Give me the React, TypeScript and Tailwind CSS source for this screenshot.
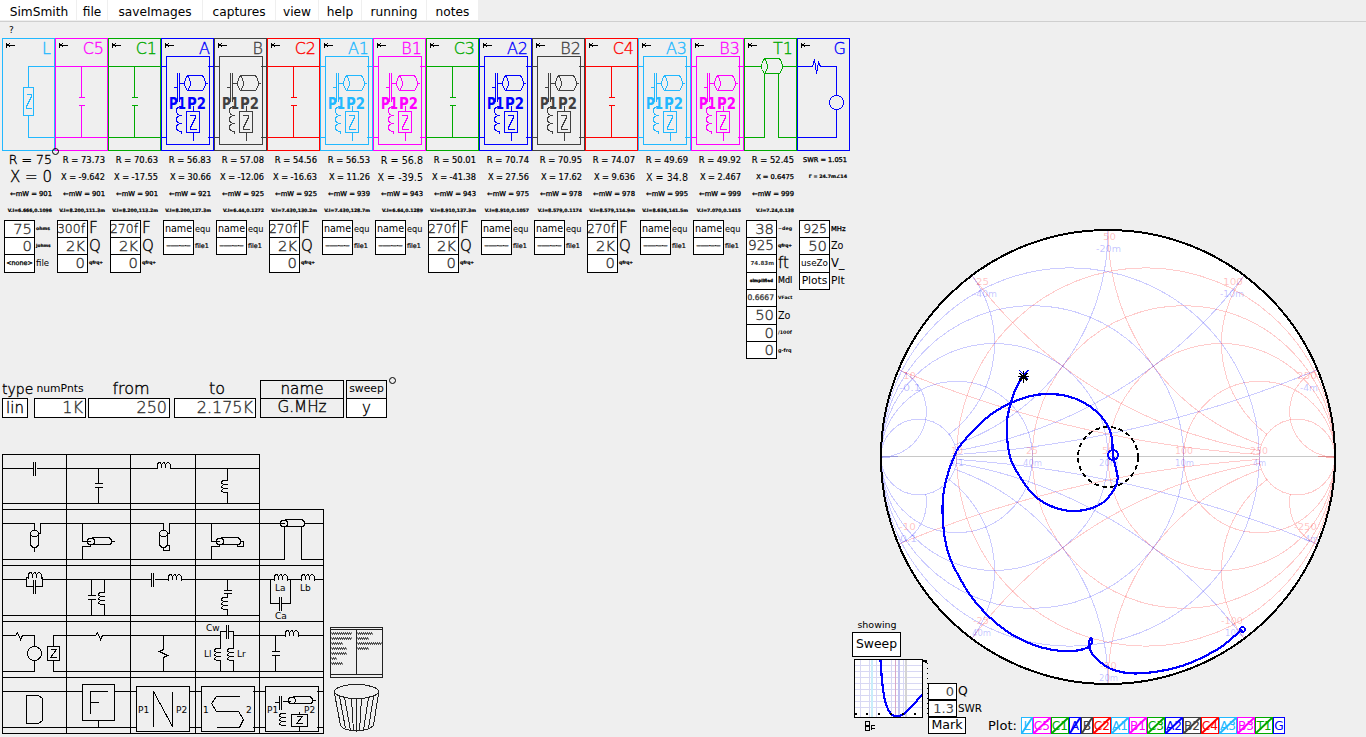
import React from "react";

const SANS = "font-['DejaVu_Sans',sans-serif]";
const THIN = "font-extralight [-webkit-text-stroke:0.35px]";

const CYAN = "#22b8ff";
const MAGENTA = "#ff00ff";
const GREEN = "#00aa00";
const BLUE = "#0000ff";
const DARK = "#404040";
const RED = "#ff0000";

/* ---------- menu ---------- */

const menus = [
  ["SimSmith", "w-[76px] pl-[2px]"],
  ["file", "w-[30px]"],
  ["saveImages", "w-[94px]"],
  ["captures", "w-[72px]"],
  ["view", "w-[42px]"],
  ["help", "w-[42px]"],
  ["running", "w-[64px]"],
  ["notes", "w-[51px]"],
];

function MenuBar() {
  return (
    <nav className="flex h-[22px] shrink-0 gap-px border-b border-[#cfcfcf] text-[12.2px] leading-[24px]">
      {menus.map(([m, w]) => (
        <div key={m} className={`${w} h-5 bg-white text-center whitespace-nowrap`}>
          {m}
        </div>
      ))}
    </nav>
  );
}

/* ---------- circuit columns ---------- */

type Kind = "L" | "C" | "N" | "T" | "G";
type Line = [string, string];
type Field = { v: string; vs: string; k: string; ks: string; c?: string };
type Col = { name: string; color: string; kind: Kind; read: Line[]; fields: Field[] };

const S12 = "text-[12.4px] " + THIN;
const S15 = "text-[14.8px] " + THIN;
const R8 = "text-[8.4px] [-webkit-text-stroke:0.2px_#000]";
const X8 = "text-[8.2px] [-webkit-text-stroke:0.2px_#000]";
const R9 = "text-[9.6px]";
const M7 = "text-[6.8px] [-webkit-text-stroke:0.3px_#000]";
const V4 = "text-[4.6px] font-bold [-webkit-text-stroke:0.2px_#000]";

const gray = "text-[#333] justify-end pr-[2px]";
const ink = "text-black justify-center";

const cap = (v: string): Field[] => [
  { v, vs: S12, k: "F", ks: "text-[15.5px] " + THIN, c: gray },
  { v: "2K", vs: S15, k: "Q", ks: "text-[15px] " + THIN, c: gray },
  { v: "0", vs: S15, k: "qfrq+", ks: "text-[4.4px] font-bold [-webkit-text-stroke:0.2px_#000]", c: gray },
];
const net: Field[] = [
  { v: "name", vs: "text-[9.6px]", k: "equ", ks: "text-[8.2px]", c: ink },
  { v: "———·—·—", vs: "text-[4.2px] font-bold [-webkit-text-stroke:0.4px_#000]", k: "file1", ks: "text-[6.4px] [-webkit-text-stroke:0.2px_#000]", c: ink },
];
const rd = (r: string, x: string, mw: string, v: string, rs = R8, xs = X8): Line[] => [
  ["R = " + r, rs],
  ["X = " + x, xs],
  ["←mW = " + mw, M7],
  [v, V4],
];

const cols: Col[] = [
  {
    name: "L", color: CYAN, kind: "L",
    read: rd("75", "0", "901", "V.I=6.666,0.1096", "text-[12.6px] " + THIN, "text-[15px] " + THIN),
    fields: [
      { v: "75", vs: S15, k: "ohms", ks: "text-[4.6px] font-bold [-webkit-text-stroke:0.2px_#000]", c: gray },
      { v: "0", vs: S15, k: "johms", ks: "text-[4.3px] font-bold [-webkit-text-stroke:0.2px_#000]", c: gray },
      { v: "<none>", vs: "text-[6.4px] [-webkit-text-stroke:0.3px_#000]", k: "file", ks: "text-[8.6px]", c: ink },
    ],
  },
  { name: "C5", color: MAGENTA, kind: "C", read: rd("73.73", "-9.642", "901", "V.I=8.200,111.3m"), fields: cap("300f") },
  { name: "C1", color: GREEN, kind: "C", read: rd("70.63", "-17.55", "901", "V.I=8.200,113.2m"), fields: cap("270f") },
  { name: "A", color: BLUE, kind: "N", read: rd("56.83", "30.66", "921", "V.I=8.200,127.3m"), fields: net },
  { name: "B", color: DARK, kind: "N", read: rd("57.08", "-12.06", "925", "V.I=6.44,0.1272"), fields: net },
  { name: "C2", color: RED, kind: "C", read: rd("54.56", "-16.63", "925", "V.I=7.430,130.2m"), fields: cap("270f") },
  { name: "A1", color: CYAN, kind: "N", read: rd("56.53", "11.26", "939", "V.I=7.430,128.7m"), fields: net },
  { name: "B1", color: MAGENTA, kind: "N", read: rd("56.8", "-39.5", "943", "V.I=6.64,0.1289", R9, R9), fields: net },
  { name: "C3", color: GREEN, kind: "C", read: rd("50.01", "-41.38", "943", "V.I=8.910,137.3m"), fields: cap("270f") },
  { name: "A2", color: BLUE, kind: "N", read: rd("70.74", "27.56", "975", "V.I=8.910,0.1057"), fields: net },
  { name: "B2", color: DARK, kind: "N", read: rd("70.95", "17.62", "978", "V.I=8.579,0.1174"), fields: net },
  { name: "C4", color: RED, kind: "C", read: rd("74.07", "9.636", "978", "V.I=8.579,114.9m"), fields: cap("270f") },
  { name: "A3", color: CYAN, kind: "N", read: rd("49.69", "34.8", "995", "V.I=8.636,141.5m", R8, R9), fields: net },
  { name: "B3", color: MAGENTA, kind: "N", read: rd("49.92", "2.467", "999", "V.I=7.070,0.1415"), fields: net },
  {
    name: "T1", color: GREEN, kind: "T",
    read: rd("52.45", "0.6475", "999", "V.I=7.24,0.138", R8, "text-[6.7px] [-webkit-text-stroke:0.3px_#000]"),
    fields: [
      { v: "38", vs: S15, k: "~deg", ks: "text-[4.8px] font-bold", c: gray },
      { v: "925", vs: "text-[13.6px] " + THIN, k: "qfrq+", ks: "text-[4.4px] font-bold [-webkit-text-stroke:0.2px_#000]", c: gray },
      { v: "74.83m", vs: "text-[5.6px] font-bold", k: "ft", ks: "text-[15px] " + THIN, c: gray },
      { v: "simplified", vs: "text-[4.2px] font-bold [-webkit-text-stroke:0.3px_#000]", k: "Mdl", ks: "text-[8px] [-webkit-text-stroke:0.2px_#000]", c: ink },
      { v: "0.6667", vs: "text-[7.6px] [-webkit-text-stroke:0.3px_#444]", k: "VFact", ks: "text-[4.6px] font-bold", c: gray },
      { v: "50", vs: S15, k: "Zo", ks: "text-[9.6px]", c: gray },
      { v: "0", vs: S15, k: "/100f", ks: "text-[4.8px] font-bold", c: gray },
      { v: "0", vs: S15, k: "g-frq", ks: "text-[4.9px] font-bold", c: gray },
    ],
  },
  {
    name: "G", color: BLUE, kind: "G",
    read: [["SWR = 1.051", "text-[6.6px] [-webkit-text-stroke:0.3px_#000]"], ["Γ = 24.7m∠14", "text-[4.8px] font-bold [-webkit-text-stroke:0.2px_#000]"]],
    fields: [
      { v: "925", vs: S12, k: "MHz", ks: "text-[6.8px] [-webkit-text-stroke:0.3px_#000]", c: gray },
      { v: "50", vs: S15, k: "Zo", ks: "text-[9.6px]", c: gray },
      { v: "useZo", vs: "text-[8.8px]", k: "V_", ks: "text-[11.5px]", c: ink },
      { v: "Plots", vs: "text-[10.7px]", k: "Plt", ks: "text-[10.7px]", c: ink },
    ],
  },
];

const cardPaths: Record<Kind, string> = {
  L: "M52 28H26V49M21 49H31V77H21ZM24 56H29V58L24 68V70H29M26 77V99H52",
  C: "M0 28H52M26 28V59M23 59H29M23 67H29M26 67V99M0 99H52",
  N: "M5 18H48V106H5ZM0 28H5M46 28H52M0 99H5M46 99H52M16 34V63M18 34V63M12 49H16M18 45H23M26 37H41Q44 41 44 45Q44 49 41 52H26M26 37Q29 41 29 45Q29 49 26 52Q23 49 23 45Q23 41 26 37M44 45H46M21 68Q15 68 15 72Q15 77 20 77Q15 77 15 81Q15 85 20 85Q15 85 15 89Q15 93 20 93V95M25 73H38V94H25ZM32 67V73M32 94V102M28 77H34V79L29 89V91H35",
  T: "M0 28H17M20 20H35Q38 24 38 28Q38 32 35 35H20M20 20Q23 24 23 28Q23 32 20 35Q17 32 17 28Q17 24 20 20M38 28H52M20 35V99H0M34 35V99H52",
  G: "M0 28H15L17 21L19 35L21 24L23 28H39V57M39 57A7 7 0 1 0 39.01 57M39 71V99H0",
};

function Card({ c }: { c: Col }) {
  return (
    <svg width="53" height="113" viewBox="0 0 53 113" className="block shrink-0">
      <g transform="translate(.5 .5)" fill="none" stroke={c.color} shapeRendering="crispEdges">
        <rect x="0" y="0" width="52" height="112" />
        <path d={cardPaths[c.kind]} />
        <path d="M3.5 4.5V9M4 6.5H12M5 6.5L8 4M5 6.5L8 9" stroke="#000" />
      </g>
      {c.kind === "N" && (
        <g fill={c.color} fontSize="15" fontWeight="bold">
          <text x="8" y="71" textLength="17" lengthAdjust="spacingAndGlyphs">P1</text>
          <text x="26" y="71" textLength="19" lengthAdjust="spacingAndGlyphs">P2</text>
        </g>
      )}
      <text x="49" y="16" textAnchor="end" fontSize="16" className="font-extralight" fill={c.color} stroke={c.color} strokeWidth="0.35">
        {c.name}
      </text>
    </svg>
  );
}

const rowH = ["h-[17px]", "h-[17px]", "h-[18px]"];

function Column({ c }: { c: Col }) {
  return (
    <div className="flex w-[53px] shrink-0 flex-col">
      <Card c={c} />
      <div className="flex h-[69px] flex-col pt-px pr-[3px]">
        {c.read.map(([t, s], i) => (
          <div key={i} className={`${s} flex h-[17px] items-center justify-end leading-none whitespace-pre`}>
            {t}
          </div>
        ))}
      </div>
      {c.fields.map((f, i) => (
        <div key={i} className={`${rowH[i % 3]} flex shrink-0 pl-[2px]`}>
          <div
            className={`${f.vs} ${f.c} -mb-px flex w-[31px] shrink-0 items-center overflow-hidden border border-black bg-white leading-none whitespace-nowrap`}
          >
            {f.v}
          </div>
          <div className={`${f.ks} flex items-center pt-px pl-px leading-none whitespace-nowrap`}>{f.k}</div>
        </div>
      ))}
    </div>
  );
}

/* ---------- sweep table ---------- */

const num = "justify-end bg-white pr-[2px] text-[16px] text-[#333] " + THIN;

const sweepCols = [
  { h: "type", hs: "justify-start text-[14px] " + THIN, v: "lin", w: "w-[26px]", m: "mr-[6px]", vs: "justify-center bg-white text-[15px] " + THIN, box: "" },
  { h: "numPnts", hs: "justify-center text-[10.8px]", v: "1K", w: "w-[52px]", m: "mr-[2px]", vs: num, box: "" },
  { h: "from", hs: "justify-center pl-1 text-[16px] " + THIN, v: "250", w: "w-[82px]", m: "mr-[4px]", vs: num, box: "" },
  { h: "to", hs: "justify-center pl-1 text-[16px] " + THIN, v: "2.175K", w: "w-[82px]", m: "mr-[4px]", vs: num, box: "" },
  { h: "name", hs: "justify-center text-[15.2px] " + THIN, v: "G.MHz", w: "w-[84px]", m: "mr-[2px]", vs: "justify-center text-[15.2px] " + THIN, box: "border-t border-x border-black" },
  { h: "sweep", hs: "justify-center text-[10.8px]", v: "y", w: "w-[41px]", m: "mr-[2px]", vs: "justify-center bg-white text-[15px] " + THIN, box: "border-t border-x border-black" },
];

function SweepTable() {
  return (
    <div className="flex h-[38px] pl-[2px]">
      {sweepCols.map((s) => (
        <div key={s.h} className={`${s.w} ${s.m} flex shrink-0 flex-col`}>
          <div className={`${s.hs} ${s.box} flex h-[18px] items-center leading-none`}>{s.h}</div>
          <div className={`${s.vs} flex h-5 items-center border border-black leading-none`}>{s.v}</div>
        </div>
      ))}
      <svg width="8" height="8" className="-mt-[4px] block">
        <circle cx="3.5" cy="4.5" r="3" fill="none" stroke="#000" />
      </svg>
    </div>
  );
}

/* ---------- parts palette ---------- */

const coilH = (x: number, y: number) =>
  `M${x} ${y}V${y - 3}Q${x} ${y - 6} ${x + 2} ${y - 6}Q${x + 4} ${y - 6} ${x + 4} ${y - 1}V${y - 3}Q${x + 5} ${y - 6} ${x + 6} ${y - 6}Q${x + 8} ${y - 6} ${x + 8} ${y - 1}V${y - 3}Q${x + 9} ${y - 6} ${x + 10} ${y - 6}Q${x + 13} ${y - 6} ${x + 13} ${y - 3}V${y}`;
const coilV = (x: number, y: number) =>
  `M${x} ${y}H${x - 3}Q${x - 6} ${y} ${x - 6} ${y + 2}Q${x - 6} ${y + 4} ${x} ${y + 4}H${x - 3}Q${x - 6} ${y + 5} ${x - 6} ${y + 6}Q${x - 6} ${y + 8} ${x} ${y + 8}H${x - 3}Q${x - 6} ${y + 9} ${x - 6} ${y + 10}Q${x - 6} ${y + 12} ${x} ${y + 12}`;
const lineH = (x: number, y: number, end: number) =>
  `M${x} ${y}A3.5 3.5 0 1 0 ${x + 7} ${y}A3.5 3.5 0 1 0 ${x} ${y}M${x + 4} ${y - 4}H${end - 3}Q${end} ${y - 3} ${end} ${y}Q${end} ${y + 3} ${end - 3} ${y + 3}H${x + 4}`;
const lineV = (x: number, y: number) =>
  `M${x} ${y}A4 3 0 1 0 ${x + 8} ${y}A4 3 0 1 0 ${x} ${y}M${x} ${y}V${y + 11}Q${x + 1} ${y + 14} ${x + 4} ${y + 14}Q${x + 7} ${y + 14} ${x + 8} ${y + 11}V${y}`;

type Part = { d: string; t?: [number, number, string][] };

const xs = [2, 66, 130, 195, 259];
const ws = [64, 64, 65, 64, 64];
const ys = [454, 509, 565, 621, 677];
const hs = [55, 56, 56, 56, 56];

const parts: Part[][] = [
  [
    { d: "M2 468H32M33 461V475M35 461V475M36 468H66M2 503H66" },
    { d: "M66 468H130M98 468V483M94 483H102M94 487H102M98 487V503M66 503H130" },
    { d: "M130 468H157M170 468H195M130 503H195" + coilH(157, 468) },
    { d: "M195 468H259M227 468V480M227 492V503M195 503H259" + coilV(227, 480) },
  ],
  [
    { d: "M2 523H34V530M34 547V551M66 523H40V533H38M2 559H66" + lineV(30, 533) },
    { d: "M66 523H130M82 523V541H90M90 544V546H82V559M111 541H114M66 559H130" + lineH(87, 541, 111) },
    { d: "M130 523H163V530M163 547V550H169V545H167M195 523H169V533H167M130 559H195" + lineV(159, 533) },
    { d: "M195 523H259M211 523V541H219M219 544V546H211V559M240 541H243V546H237V544M195 559H259" + lineH(216, 541, 240) },
    { d: "M259 523H284M304 523H323M284 526V559H259M301 526V559H323" + lineH(280, 523, 304) },
  ],
  [
    { d: "M2 579H26M28 577H26V586H33M35 586H42V577H41M33 579V593M35 579V593M42 579H66M2 615H66" + coilH(28, 578) },
    { d: "M66 579H130M91 579V595M87 595H95M87 599H95M91 599V615M104 579V592M104 604V615M66 615H130" + coilV(104, 592) },
    { d: "M130 579H151M151 572V586M153 572V586M154 579H168M181 579H195M130 615H195" + coilH(168, 580) },
    { d: "M195 579H259M227 579V590M223 590H231M223 593H231M227 593V597M227 609V615M195 615H259" + coilV(227, 597) },
    {
      d: "M259 579H274M287 579H301M314 579H323M270 579V603H279M279 596V610M281 596V610M281 603H290V579" + coilH(274, 580) + coilH(301, 580),
      t: [[275, 591, "La"], [300, 591, "Lb"], [275, 619, "Ca"]],
    },
  ],
  [
    { d: "M2 635H15L17 632L20 639L22 635H34V646M27 653A7 7 0 1 0 41 653A7 7 0 1 0 27 653M34 660V671H2M66 635H53V646M47 646H59V660H47ZM50 649H56L50 657H56M53 660V671H66" },
    { d: "M66 635H95L97 632L100 639L102 635H130M66 671H130" },
    { d: "M130 635H195M163 635V649L159 651L167 655L163 657V671M130 671H195" },
    {
      d: "M195 635H220M226 631H220V648M226 624V638M228 624V638M228 631H233V648M233 635H259M220 660V671M233 660V671M195 671H259" + coilV(220, 648) + coilV(233, 648),
      t: [[206, 631, "Cw"], [204, 657, "Ll"], [237, 657, "Lr"]],
    },
    { d: "M259 635H285M298 635H323M275 635V651M271 651H279M271 655H279M275 655V671M259 671H323" + coilH(285, 636) },
  ],
  [
    { d: "M2 691H66M2 727H66M26 695H38L42 698V720L38 723H26Z" },
    { d: "M66 691H82M82 684H114V720H82ZM114 691H130M107 691H90V713M90 702H98M98 720V727M66 727H130" },
    { d: "M130 691H136M136 686H189V731H136ZM189 691H195M130 727H136M189 727H195M153 726V691L172 726V691", t: [[138, 713, "P1"], [176, 713, "P2"]] },
    { d: "M195 691H201M201 686H254V731H201ZM252 691H259M195 727H201M252 727H259M239 696H216L211 703L216 711H238L243 719L239 727H216", t: [[203, 713, "1"], [246, 713, "2"]] },
    {
      d: "M259 691H265M265 686H318V731H265ZM316 691H323M259 727H265M316 727H323M274 702H279M279 695V709M281 695V709M282 701H290M312 700H315M291 714H307V726H291ZM296 716H302L296 723H302M299 711V714M299 726V730" + lineH(288, 700, 312) + coilV(285, 713),
      t: [[267, 713, "P1"], [304, 713, "P2"]],
    },
  ],
];

function Palette() {
  return (
    <div className="flex w-[322px] flex-col items-start border-b border-black">
      {parts.map((row, r) => (
        <div key={r} className="flex border-r border-black">
          {row.map((p, i) => (
            <svg key={i} width={ws[i]} height={hs[r]} viewBox={`${xs[i]} ${ys[r]} ${ws[i]} ${hs[r]}`} className="block">
              <g transform="translate(.5 .5)" fill="none" stroke="#000" shapeRendering="crispEdges">
                <path d={`M${xs[i]} ${ys[r] + hs[r]}V${ys[r]}H${xs[i] + ws[i]}`} />
                <path d={p.d} />
              </g>
              {p.t?.map(([x, y, t]) => (
                <text key={t} x={x} y={y} fontSize="9">
                  {t}
                </text>
              ))}
            </svg>
          ))}
        </div>
      ))}
    </div>
  );
}

const zig = (x: number, y: number, end: number) => {
  let d = `M${x} ${y}`;
  for (let i = x + 1, k = 0; i <= end; i++, k++) d += `L${i} ${k % 2 ? y : y + 2}`;
  return d;
};

function Bin() {
  return (
    <svg width="56" height="107" viewBox="328 627 56 107" className="block">
      <g transform="translate(.5 .5)" fill="none" stroke="#222" shapeRendering="crispEdges">
        <path d="M330 627H382V677H330ZM330 629H382M330 674H382M356 629V674" />
        <path
          shapeRendering="auto"
          d={[351, 351, 342, 346, 346, 336, 342].map((e, i) => zig(331, 632 + i * 5, e)).join("") + [372, 368, 381, 368].map((e, i) => zig(357, 632 + i * 5, e)).join("")}
        />
        <ellipse cx="356" cy="691" rx="22" ry="7" />
        <path d="M334 693L340 725L343 728Q356 733 369 728L373 725L378 693M339 696L345 728M344 697L350 730M351 698L353 731M356 698V731M361 698L359 731M368 697L363 730M373 696L368 728" />
      </g>
    </svg>
  );
}

/* ---------- Smith chart ---------- */

const CX = 1108;
const CY = 457;
const RAD = 227;

const gam = (r: number, x: number): [number, number] => {
  const den = (r + 1) * (r + 1) + x * x;
  return [(r * r - 1 + x * x) / den, (2 * x) / den];
};

const levels = [0.2, 0.5, 1, 2, 5];

const reactArc = (x: number) => {
  const max = x >= 5 ? 400 : 5;
  let d = "";
  for (let i = 0; i <= 60; i++) {
    const r = Math.pow(max + 1, i / 60) - 1;
    const [u, v] = gam(r, x);
    d += `${i ? "L" : "M"}${(CX + u * RAD).toFixed(1)} ${(CY - v * RAD).toFixed(1)}`;
  }
  return d;
};

function Grid() {
  return (
    <g fill="none">
      {levels.map((r) => (
        <circle key={r} cx={CX + (RAD * r) / (1 + r)} cy={CY} r={RAD / (1 + r)} />
      ))}
      {levels.map((x) => (
        <path key={x} d={reactArc(x) + reactArc(-x)} />
      ))}
    </g>
  );
}

const trace: [number, number][] = [
  [1023.3, 376], [1016.7, 386.7], [1011.7, 400], [1007.6, 416.7], [1006.8, 430], [1008, 446.7], [1011, 460], [1016.9, 471.7],
  [1026.7, 486.7], [1036.7, 497.7], [1050, 505.7], [1063.3, 510], [1076.7, 511], [1090, 508.6], [1103.3, 502.3], [1115, 488],
  [1117.7, 478.3], [1115.8, 468], [1113, 455], [1111.7, 436.7], [1106.7, 424], [1096.7, 411.7], [1083.3, 402.3],
  [1066.7, 395.9], [1046.7, 394], [1030, 396.2], [1010, 403.3], [993.3, 412.8], [976.7, 426.9], [963.3, 441.7], [957, 450],
  [952.8, 460], [948.5, 471.7], [943.7, 491.7], [942.5, 511.7], [944.3, 535], [948.8, 555], [956.5, 572], [970, 595],
  [986.7, 614.5], [1005, 630], [1023.3, 640.6], [1041.7, 647.5], [1060, 650.9], [1073.3, 651], [1083.3, 649.2], [1089.8, 645.7],
  [1092.3, 640], [1090.6, 638.5], [1089, 644], [1091, 652], [1098.3, 660.5], [1110, 668.5], [1125, 672.7], [1138, 673.4],
  [1155, 671.9], [1175, 668], [1191.7, 662.3], [1208.3, 654.4], [1221.7, 646.7], [1233.3, 637], [1242.3, 629.5],
];

const smooth = (p: [number, number][]) => {
  let d = `M${p[0][0]} ${p[0][1]}`;
  for (let i = 0; i < p.length - 1; i++) {
    const a = p[Math.max(0, i - 1)];
    const b = p[i];
    const c = p[i + 1];
    const e = p[Math.min(p.length - 1, i + 2)];
    d += `C${b[0] + (c[0] - a[0]) / 6} ${b[1] + (c[1] - a[1]) / 6} ${c[0] - (e[0] - b[0]) / 6} ${c[1] - (e[1] - b[1]) / 6} ${c[0]} ${c[1]}`;
  }
  return d;
};

type Lbl = [number, number, string, number];
const redLabels: Lbl[] = [
  [1103, 240, "50", 13], [976, 285, "25", 13], [1223, 285, "100", 20], [903, 379, "10", 13], [1297, 379, "250", 20],
  [899, 530, "-10", 17], [973, 624, "-25", 16], [1100, 669, "-50", 17], [1221, 624, "-100", 22], [1294, 530, "-250", 23],
  [951, 454, "10", 12], [1026, 454, "25", 12], [1102, 454, "50", 12], [1175, 454, "100", 18], [1250, 454, "250", 18],
];
const blueLabels: Lbl[] = [
  [1096, 252, "-20m", 25], [973, 297, "-40m", 24], [1220, 297, "-10m", 24], [899, 391, "-0.1", 22], [1300, 391, "-4m", 18],
  [900, 542, "0.1", 17], [972, 636, "40m", 19], [1099, 681, "20m", 19], [1225, 636, "10m", 19], [1305, 542, "4m", 13],
  [949, 466, "0.1", 15], [1023, 466, "40m", 19], [1099, 466, "20m", 19], [1175, 466, "10m", 19], [1253, 466, "4m", 13],
];

function Smith() {
  return (
    <svg width="458" height="458" viewBox="879 228 458 458" className="ml-[29px] block shrink-0">
      <circle cx={CX} cy={CY} r={RAD} fill="#fff" />
      <g shapeRendering="crispEdges">
        <g stroke="#ff0000" strokeOpacity="0.2">
          <Grid />
        </g>
        <g stroke="#0000ff" strokeOpacity="0.2" transform={`translate(${2 * CX} 0) scale(-1 1)`}>
          <Grid />
        </g>
        <path d="M881 456.5H1335" stroke="#c8c8c8" />
        <path d="M1318 456.5H1334M1326 457.5H1334" stroke="#ff0000" strokeOpacity="0.3" />
        <path d="M882 456.5H898M882 457.5H890" stroke="#0000ff" strokeOpacity="0.25" />
      </g>
      <g fontSize="9.5" fill="#ff0000" fillOpacity="0.25">
        {redLabels.map(([x, y, t, w]) => (
          <text key={t + y} x={x} y={y} textLength={w} lengthAdjust="spacingAndGlyphs">{t}</text>
        ))}
      </g>
      <g fontSize="9.5" fill="#0000ff" fillOpacity="0.25">
        {blueLabels.map(([x, y, t, w]) => (
          <text key={t + y} x={x} y={y} textLength={w} lengthAdjust="spacingAndGlyphs">{t}</text>
        ))}
      </g>
      <g fill="none" strokeWidth="2" shapeRendering="crispEdges">
        <circle cx={CX} cy={CY} r={RAD} stroke="#000" />
        <circle cx={CX} cy={CY} r="30" stroke="#000" strokeWidth="1.8" strokeDasharray="5 3" />
        <path d={smooth(trace)} stroke="#0000ff" strokeWidth="2.2" />
        <circle cx="1113" cy="455" r="5" stroke="#0000ff" />
        <circle cx="1242.5" cy="629.5" r="2.5" stroke="#0000ff" strokeWidth="1.6" />
        <path d="M1019 370L1028 379M1028.5 370L1019 379" stroke="#0000ff" strokeWidth="1.4" />
        <path d="M1023.5 371V383M1018 376.5H1029M1019.5 373L1027.5 380.5M1027.5 373L1019.5 380.5" stroke="#000" strokeWidth="1.8" />
      </g>
    </svg>
  );
}

/* ---------- sweep view and plot selectors ---------- */

function MiniPlot() {
  return (
    <svg width="76" height="76" viewBox="853 658 76 76" className="block shrink-0">
      <rect x="854" y="659" width="68" height="58" fill="#fff" />
      <g shapeRendering="crispEdges" fill="none">
        <path
          d="M855 665.5H922M855 671.5H922M855 677.5H922M855 683.5H922M855 689.5H922M855 695.5H922M855 701.5H922M855 707.5H922M860.5 660V717M869.5 660V717M876.5 660V717M891.5 660V717M895.5 660V717M899.5 660V717M903.5 660V717"
          stroke="#d8d8f4"
        />
        <path d="M872 660V717" stroke="#c8eefa" strokeWidth="2" />
        <path d="M895.5 660V717" stroke="#d8a8c8" />
        <path d="M899 660V717" stroke="#c4c4f0" strokeWidth="2" />
        <path d="M906 660V717" stroke="#d4d4d4" strokeWidth="2" />
        <path d="M880.5 660C882 685 884 717 897 716.5C906 716 915 702 922 695" stroke="#0000ff" strokeWidth="2.2" />
        <rect x="854.5" y="659.5" width="68" height="58" stroke="#000" />
        <path d="M923 660.5H927M925 661.5H927" stroke="#000" strokeWidth="2" />
        <path d="M927.5 663V717" stroke="#000" strokeDasharray="1 4" />
        <path d="M855 714H857M866 714H868M878 714H880M890 714H892M902 714H904M914 714H916" stroke="#000" strokeWidth="2" />
        <path d="M865.5 721.5H869.5V725.5H865.5ZM865.5 726.5H869.5V730.5H865.5ZM871 725.5H874.5M871.5 725V730M871 728H875" stroke="#000" />
      </g>
    </svg>
  );
}

function PlotPicks() {
  return (
    <div className="flex h-[17px]">
      {cols.map((c, i) => (
        <svg key={c.name} width={c.name.length === 1 ? 12 : 18} height="17" className="block">
          <rect x=".5" y=".5" width={c.name.length === 1 ? 11 : 17} height="16" fill="#fff" stroke={c.color} shapeRendering="crispEdges" />
          <text x={c.name.length === 1 ? 6 : 9} y="13" fontSize="12.2" textAnchor="middle" fill={c.color}>
            {c.name}
          </text>
          {i < cols.length - 1 && (
            <path d={c.name.length === 1 ? "M1 16L11 1" : "M1 16L17 1"} stroke={c.color} strokeWidth="2" />
          )}
        </svg>
      ))}
    </div>
  );
}

function Controls() {
  return (
    <div className="relative -mt-[68px] flex pl-[2px]">
      <div className="flex w-[76px] flex-col">
        <div className="flex h-[14px] items-center justify-center pr-[26px] text-[9.5px] leading-none">showing</div>
        <div className="flex h-[25px] w-[49px] items-center justify-center border border-black bg-white text-[12.4px] leading-none">Sweep</div>
        <div className="mt-px pl-px">
          <MiniPlot />
        </div>
      </div>
      <div className="flex flex-col pt-[65px]">
        <div className="flex h-[17px]">
          <div className="flex w-[29px] items-center justify-end border border-black bg-white pr-[2px] text-[13px] leading-none text-[#444]">0</div>
          <div className="flex items-center pl-px text-[12.4px] leading-none">Q</div>
        </div>
        <div className="flex h-[17px]">
          <div className="flex w-[29px] items-center justify-end border border-black bg-white pr-[2px] text-[13px] leading-none text-[#444]">1.3</div>
          <div className="flex items-center pl-px text-[10.4px] leading-none">SWR</div>
        </div>
        <div className="flex h-[17px] w-[93px] items-center">
          <div className="flex h-[17px] w-[38px] items-center justify-center border border-black bg-white text-[12.6px] leading-none">Mark</div>
          <div className="ml-[22px] text-[13px] leading-none">Plot:</div>
        </div>
      </div>
      <div className="pt-[99px]">
        <PlotPicks />
      </div>
    </div>
  );
}

export default function App() {
  return (
    <div className={`${SANS} flex h-[737px] w-[1366px] flex-col overflow-hidden bg-[#efefef] text-black`}>
      <MenuBar />
      <main className="flex flex-1">
        <section className="flex w-[850px] shrink-0 flex-col">
          <div className="h-4 pl-[9px] text-[9px] leading-[17px]">?</div>
          <div className="relative flex h-[342px] pl-[2px]">
            {cols.map((c) => (
              <Column key={c.name} c={c} />
            ))}
            <svg width="9" height="9" className="absolute top-[109px] left-[51px]">
              <circle cx="4.5" cy="4.5" r="3" fill="none" stroke="#000" />
            </svg>
          </div>
          <SweepTable />
          <div className="mt-[36px] flex items-end pl-[2px]">
            <Palette />
            <div className="ml-[4px]">
              <Bin />
            </div>
          </div>
        </section>
        <section className="flex w-[516px] flex-col pt-[206px]">
          <Smith />
          <Controls />
        </section>
      </main>
    </div>
  );
}
